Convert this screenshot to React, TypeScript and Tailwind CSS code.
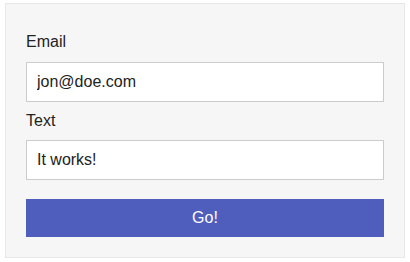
export default function App() {
  return (
    <div className="h-[262px] w-[410px] bg-white pl-[5px] pt-[3px] font-['Liberation_Sans',Arial,sans-serif] text-[16px] text-[#222]">
      <form
        className="flex w-[400px] flex-col border border-[#e8e8e8] bg-[#f6f6f6] px-[20px] pb-[20px] pt-[29px]"
        onSubmit={(e) => e.preventDefault()}
      >
        <label className="mb-[11px] block leading-[18px]">Email</label>
        <input
          type="email"
          defaultValue="jon@doe.com"
          className="h-[40px] w-full border border-[#cccccc] bg-white px-[10px] text-[16px] text-[#222] outline-none"
        />
        <label className="mb-[10px] mt-[10px] block leading-[18px]">Text</label>
        <input
          type="text"
          defaultValue="It works!"
          className="h-[40px] w-full border border-[#cccccc] bg-white px-[10px] text-[16px] text-[#222] outline-none"
        />
        <button
          type="submit"
          className="mt-[19px] h-[38px] w-full bg-[#4f5ebd] text-[16px] text-white"
        >
          Go!
        </button>
      </form>
    </div>
  );
}
